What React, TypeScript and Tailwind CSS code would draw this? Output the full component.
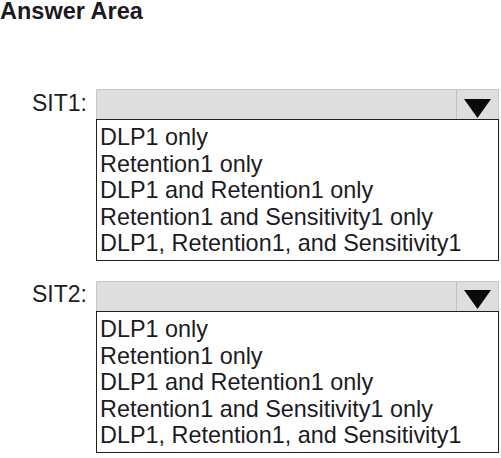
const options = [
  'DLP1 only',
  'Retention1 only',
  'DLP1 and Retention1 only',
  'Retention1 and Sensitivity1 only',
  'DLP1, Retention1, and Sensitivity1',
];

function Dropdown({ label }: { label: string }) {
  return (
    <div className="flex">
      <div className="w-[96px] pl-[32px] shrink-0">
        <span className="block mt-[2.5px] text-[23px] leading-none text-[#1d1d22] whitespace-nowrap">{label}</span>
      </div>
      <div className="w-[403px] shrink-0 flex flex-col">
        <div className="h-[30px] flex bg-[#dedede] border-t border-l border-r border-[#c6c6c6]">
          <div className="flex-1" />
          <div className="w-[42px] border-l border-[#c2c2c2] flex justify-center">
            <svg width="27" height="19" viewBox="0 0 27 19" className="mt-[8.5px]">
              <polygon points="0,0 27,0 13.5,19" fill="#0a0a0a" />
            </svg>
          </div>
        </div>
        <ul className="border-[1.5px] border-[#1f1f1f] bg-white pl-[3px] pt-[4px] pb-[3px] text-[23.4px] leading-[26.6px] text-[#1b1b24]">
          {options.map((o) => (
            <li key={o} className="whitespace-nowrap">{o}</li>
          ))}
        </ul>
      </div>
    </div>
  );
}

export default function App() {
  return (
    <div className="w-[501px] h-[458px] bg-white overflow-hidden" style={{ fontFamily: '"Liberation Sans", Arial, sans-serif' }}>
      <h1 className="pt-[1px] text-[23.5px] font-bold leading-[20px] text-[#1a1a1f]">Answer Area</h1>
      <div className="mt-[68px] flex flex-col gap-[20px]">
        <Dropdown label="SIT1:" />
        <Dropdown label="SIT2:" />
      </div>
    </div>
  );
}
